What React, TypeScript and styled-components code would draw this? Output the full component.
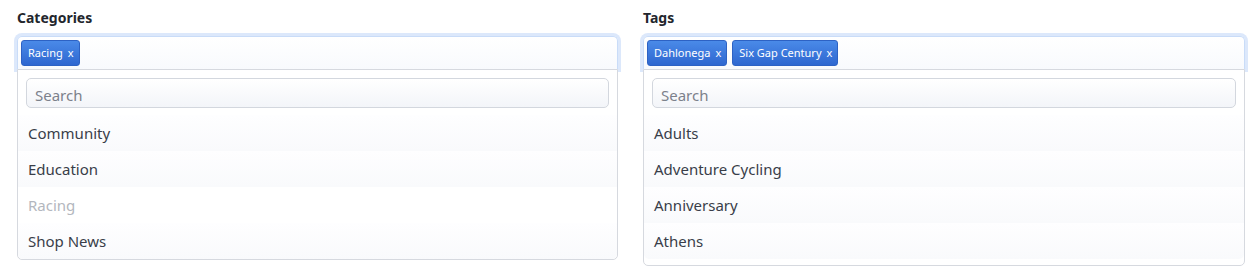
import React from 'react';
import styled, { createGlobalStyle } from 'styled-components';

const GlobalStyle = createGlobalStyle`
    body {
        margin: 0;
        background: #ffffff;
        font-family: "Noto Sans", "Open Sans", Arial, sans-serif;
        color: #373c47;
    }
`;

interface Option {
    label: string;
    disabled?: boolean;
}

interface MultiSelectProps {
    label: string;
    selected: string[];
    options: Option[];
    extraSpace?: number;
}

const categories: Option[] = [
    { label: 'Community' },
    { label: 'Education' },
    { label: 'Racing', disabled: true },
    { label: 'Shop News' },
];

const tags: Option[] = [
    { label: 'Adults' },
    { label: 'Adventure Cycling' },
    { label: 'Anniversary' },
    { label: 'Athens' },
];

const MultiSelect: React.FunctionComponent<MultiSelectProps> = ({
    label, selected, options, extraSpace = 0,
}): React.ReactElement => (
    <Field>
        <Label>{ label }</Label>
        <Choices>
            { selected.map((item) => (
                <Chip key={item}>
                    { item }
                    <Close>x</Close>
                </Chip>
            )) }
        </Choices>
        <Drop>
            <Search placeholder="Search" readOnly />
            <Results extraSpace={extraSpace}>
                { options.map((option) => (
                    <Result key={option.label} disabled={option.disabled}>
                        { option.label }
                    </Result>
                )) }
            </Results>
        </Drop>
    </Field>
);

const App = (): React.ReactElement => (
    <>
        <GlobalStyle />
        <Page>
            <MultiSelect label="Categories" selected={['Racing']} options={categories} />
            <MultiSelect
                label="Tags"
                selected={['Dahlonega', 'Six Gap Century']}
                options={tags}
                extraSpace={6}
            />
        </Page>
    </>
);

const Page = styled.div`
    display: grid;
    grid-template-columns: 601px 602px;
    column-gap: 25px;
    padding: 8px 15px 0 17px;
`;

const Field = styled.div`
    display: flex;
    flex-direction: column;
`;

const Label = styled.label`
    font-size: 14px;
    font-weight: 700;
    line-height: 20px;
    color: #23262d;
    margin-bottom: 8px;
`;

const Choices = styled.div`
    display: flex;
    align-items: flex-start;
    gap: 5px;
    height: 33px;
    box-sizing: border-box;
    padding: 3px 3px 0;
    border: 1px solid #c9dcf8;
    border-bottom: none;
    border-radius: 5px 5px 0 0;
    background: linear-gradient(#ffffff, #f8fafd);
    box-shadow: 0 0 0 3px #dce8fb;
`;

const Chip = styled.span`
    display: inline-flex;
    align-items: center;
    height: 26px;
    padding: 0 5px 1px 6px;
    border-radius: 3px;
    background: linear-gradient(#4a8ae8, #2e67d0);
    border: 1px solid #2d62c4;
    box-sizing: border-box;
    color: #ffffff;
    font-size: 11px;
    white-space: nowrap;
`;

const Close = styled.span`
    margin-left: 5px;
    font-size: 11px;
`;

const Drop = styled.div`
    display: flex;
    flex-direction: column;
    border: 1px solid #d6d9df;
    border-radius: 0 0 5px 5px;
    background: #ffffff;
`;

const Search = styled.input`
    margin: 8px 8px 0;
    height: 30px;
    box-sizing: border-box;
    padding: 3px 8px 0;
    border: 1px solid #d3d7de;
    border-radius: 5px;
    background: linear-gradient(#ffffff, #f3f5f9);
    font-family: inherit;
    font-size: 15px;
    color: #373c47;
    outline: none;

    &::placeholder {
        color: #7c818b;
    }
`;

const Results = styled.ul`
    list-style: none;
    margin: 7px 0 0;
    padding: 0 0 ${({ extraSpace }: { extraSpace: number }): number => extraSpace}px;
`;

const Result = styled.li<{ disabled?: boolean }>`
    height: 36px;
    display: flex;
    align-items: center;
    padding-left: 10px;
    font-size: 15px;
    color: ${({ disabled }): string => (disabled ? '#b3b7be' : '#393e49')};
    background: ${({ disabled }): string => (disabled ? '#ffffff' : 'linear-gradient(#fefeff, #f9fafc)')};

    &:last-child {
        border-radius: 0 0 5px 5px;
    }
`;

export default App;
